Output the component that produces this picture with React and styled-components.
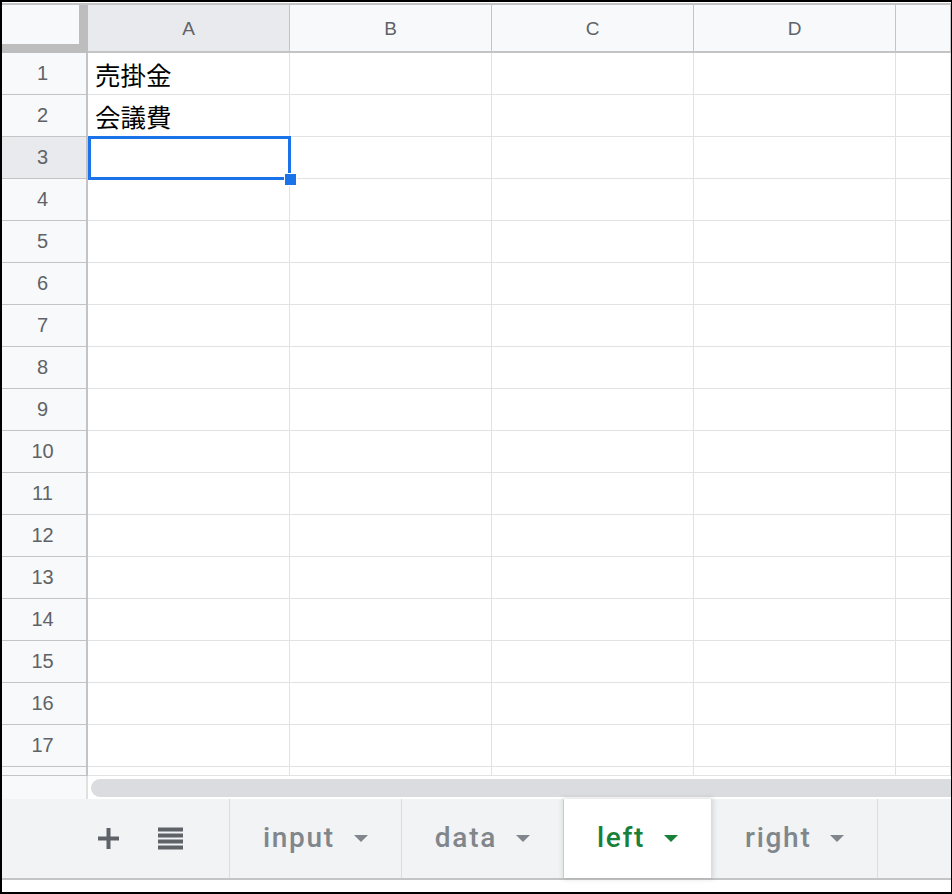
import styled, { createGlobalStyle } from 'styled-components';

const GlobalStyle = createGlobalStyle`
  html, body {
    margin: 0;
    padding: 0;
    background: #ffffff;
  }
`;

const COLS = '86px repeat(4, 202px) 1fr';

const Frame = styled.div`
  width: 952px;
  height: 894px;
  box-sizing: border-box;
  border: 2px solid #000;
  border-right-width: 1px;
  background: #fff;
  display: flex;
  flex-direction: column;
  overflow: hidden;
  font-family: "Liberation Sans", Arial, sans-serif;
`;

const HeaderRow = styled.div`
  display: grid;
  grid-template-columns: ${COLS};
  margin-top: 1px;
  height: 50px;
  flex-shrink: 0;
  box-sizing: border-box;
  border-top: 2px solid #c4c4c4;
`;

const Corner = styled.div`
  background: #f8f9fa;
  box-sizing: border-box;
  border-right: 9px solid #bdbdbd;
  border-bottom: 9px solid #bdbdbd;
`;

const ColHead = styled.div`
  display: flex;
  align-items: center;
  justify-content: center;
  padding-top: 1px;
  box-sizing: border-box;
  border-right: 1px solid #c4c4c4;
  border-bottom: 2px solid #c4c4c4;
  background: ${(p) => (p.$active ? '#e8eaed' : '#f8f9fa')};
  color: #5f6368;
  font-size: 19px;
`;

const GridRow = styled.div`
  display: grid;
  grid-template-columns: ${COLS};
  height: ${(p) => p.$h || 42}px;
  flex-shrink: 0;
`;

const RowHead = styled.div`
  display: flex;
  align-items: center;
  justify-content: center;
  padding-right: 3px;
  box-sizing: border-box;
  border-right: 2px solid #c4c4c4;
  border-bottom: 1px solid #c4c4c4;
  background: ${(p) => (p.$active ? '#e8eaed' : '#f8f9fa')};
  color: #5f6368;
  font-size: 20px;
`;

const Cell = styled.div`
  position: relative;
  display: flex;
  align-items: center;
  padding: 0 7px;
  box-sizing: border-box;
  border-right: 1px solid #e2e2e3;
  border-bottom: 1px solid #e2e2e3;
  font-family: "Noto Sans CJK JP", "Liberation Sans", sans-serif;
  font-size: 25.5px;
  color: #000;
  white-space: nowrap;
`;

const Selection = styled.div`
  position: absolute;
  top: -1px;
  left: 0;
  right: -2px;
  bottom: -2px;
  border: 3px solid #1a73e8;
  pointer-events: none;
  z-index: 2;
`;

const FillHandle = styled.div`
  position: absolute;
  right: -9px;
  bottom: -9px;
  width: 11px;
  height: 11px;
  background: #1a73e8;
  border: 1px solid #fff;
`;

const ScrollStrip = styled.div`
  display: grid;
  grid-template-columns: 86px 1fr;
  height: 23px;
  flex-shrink: 0;
`;

const ScrollGutter = styled.div`
  background: #f8f9fa;
  box-sizing: border-box;
  border-right: 2px solid #e0e0e0;
`;

const ScrollTrack = styled.div`
  padding: 3px 0 2px 3px;
`;

const ScrollThumb = styled.div`
  height: 18px;
  border-radius: 9px 0 0 9px;
  background: #dadce0;
`;

const TabBar = styled.div`
  display: flex;
  height: 81px;
  flex-shrink: 0;
  box-sizing: border-box;
  background: #f1f3f4;
  border-bottom: 2px solid #c4c4c4;
`;

const TabTools = styled.div`
  display: flex;
  align-items: center;
  width: 228px;
  box-sizing: border-box;
  padding-left: 96px;
  gap: 39px;
  border-right: 1px solid #dadce0;
  color: #5f6368;
`;

const Tab = styled.div`
  position: relative;
  display: flex;
  align-items: center;
  gap: 19px;
  padding: 0 33px 2px;
  border-right: 1px solid #dadce0;
  font-family: Roboto, "Liberation Sans", sans-serif;
  font-weight: 500;
  font-size: 28px;
  letter-spacing: 1.7px;
  color: ${(p) => (p.$active ? '#188038' : '#80868b')};
  background: ${(p) => (p.$active ? '#ffffff' : 'transparent')};
  box-shadow: ${(p) => (p.$active ? '0 0 5px 1px rgba(60, 64, 67, 0.18)' : 'none')};
  z-index: ${(p) => (p.$active ? 1 : 0)};
`;

const Caret = styled.span`
  width: 0;
  height: 0;
  margin-top: 2px;
  border-left: 7px solid transparent;
  border-right: 7px solid transparent;
  border-top: 7px solid currentColor;
`;

const BottomGap = styled.div`
  flex: 1;
  background: #fff;
`;

const PlusIcon = () => (
  <svg width="21" height="21" viewBox="0 0 21 21">
    <rect x="8.5" y="0" width="4" height="21" fill="currentColor" />
    <rect x="0" y="8.5" width="21" height="4" fill="currentColor" />
  </svg>
);

const ListIcon = () => (
  <svg width="25" height="23" viewBox="0 0 25 23">
    {[0, 6, 12, 18].map((y) => (
      <rect key={y} x="0" y={y + 0.5} width="25" height="4" fill="currentColor" />
    ))}
  </svg>
);

const cells = { 1: '売掛金', 2: '会議費' };
const rows = Array.from({ length: 17 }, (_, i) => i + 1);
const sheets = ['input', 'data', 'left', 'right'];

export default function App() {
  return (
    <>
      <GlobalStyle />
      <Frame>
        <HeaderRow>
          <Corner />
          <ColHead $active>A</ColHead>
          <ColHead>B</ColHead>
          <ColHead>C</ColHead>
          <ColHead>D</ColHead>
          <ColHead />
        </HeaderRow>

        {rows.map((n) => (
          <GridRow key={n}>
            <RowHead $active={n === 3}>{n}</RowHead>
            <Cell>
              {cells[n]}
              {n === 3 && (
                <Selection>
                  <FillHandle />
                </Selection>
              )}
            </Cell>
            <Cell />
            <Cell />
            <Cell />
            <Cell />
          </GridRow>
        ))}

        <GridRow $h={9}>
          <RowHead />
          <Cell />
          <Cell />
          <Cell />
          <Cell />
          <Cell />
        </GridRow>

        <ScrollStrip>
          <ScrollGutter />
          <ScrollTrack>
            <ScrollThumb />
          </ScrollTrack>
        </ScrollStrip>

        <TabBar>
          <TabTools>
            <PlusIcon />
            <ListIcon />
          </TabTools>
          {sheets.map((name) => (
            <Tab key={name} $active={name === 'left'}>
              {name}
              <Caret />
            </Tab>
          ))}
        </TabBar>

        <BottomGap />
      </Frame>
    </>
  );
}
